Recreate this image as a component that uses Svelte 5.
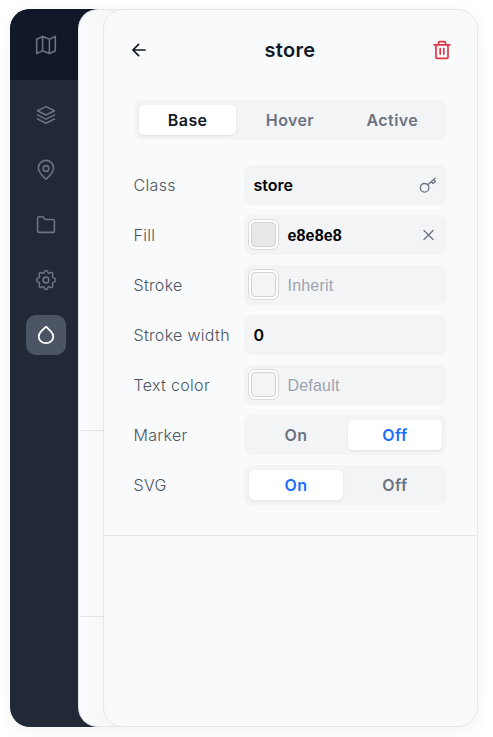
<script>
  const tabs = ['Base', 'Hover', 'Active'];
  let tab = $state('Base');
  const rows = [
    { label: 'Class', value: 'store', icon: 'key' },
    { label: 'Fill', value: 'e8e8e8', swatch: '#e8e8e8', icon: 'clear' },
    { label: 'Stroke', placeholder: 'Inherit', swatch: '#f3f4f6' },
    { label: 'Stroke width', value: '0' },
    { label: 'Text color', placeholder: 'Default', swatch: '#f3f4f6' }
  ];
  const switches = $state([
    { label: 'Marker', value: 'Off' },
    { label: 'SVG', value: 'On' }
  ]);
</script>

<div class="app">
  <div class="window">
    <nav>
      <div class="brand">
        <svg width="22" height="22" viewBox="0 0 22 22"><path d="M1.700 5.200 7.600 2.400v14.400L1.700 19.600zM7.600 2.400l6.800 2.800v14.400l-6.800-2.800M14.400 5.200l5.900-2.800v14.400l-5.900 2.800" /></svg>
      </div>
      <div class="items">
        <button aria-label="Layers"><svg width="22" height="22" viewBox="0 0 22 22"><path d="M11 2.600 19.500 6.800 11 11 2.500 6.800zM2.500 10.900 11 15.100l8.500-4.200M2.500 15 11 19.200l8.500-4.200" /></svg></button>
        <button aria-label="Markers"><svg width="22" height="22" viewBox="0 0 22 22"><path d="M18.600 9c0 4.700-5.500 9.300-7.600 11.200C8.900 18.300 3.400 13.700 3.400 9a7.600 7.600 0 0 1 15.200 0z" /><circle cx="11" cy="9.400" r="2.800" /></svg></button>
        <button aria-label="Groups"><svg width="22" height="22" viewBox="0 0 22 22"><path d="M2.600 4.300a1.500 1.500 0 0 1 1.500-1.500H8l2.200 2.700h7.700a1.500 1.500 0 0 1 1.500 1.500v9.900a1.500 1.500 0 0 1-1.500 1.500H4.100a1.500 1.500 0 0 1-1.500-1.500z" /></svg></button>
        <button aria-label="Settings"><svg width="22" height="22" viewBox="0 0 22 22"><circle cx="11" cy="11" r="2.900" /><path d="M9.200 3.200C9.700.9 12.300.9 12.800 3.200c.2 1 1.200 1.400 2.100.8 2-1.300 3.800.5 2.700 2.600-.5.900-.1 1.900.9 2.200 2.600.5 2.600 3.900 0 4.400-1 .3-1.400 1.300-.9 2.200 1.100 2.100-.7 3.900-2.700 2.600-.9-.6-1.900-.2-2.100.8-.5 2.300-3.100 2.300-3.600 0-.2-1-1.200-1.400-2.100-.8-2 1.300-3.800-.5-2.700-2.600.5-.9.100-1.900-.9-2.200-2.600-.5-2.600-3.900 0-4.400 1-.3 1.400-1.300.9-2.200C3.300 4.500 5.100 2.700 7.100 4c.9.600 1.900.2 2.100-.8z" /></svg></button>
        <button class="active" aria-label="Styles"><svg width="22" height="22" viewBox="0 0 22 22"><path d="M11 2.600 6.100 7.400C2.800 10.900 3.200 14.800 6 17.300c2.800 2.500 7.200 2.500 10 0 2.800-2.500 3.200-6.400-.1-9.900z" /></svg></button>
      </div>
    </nav>

    <div class="back"><div class="block one"></div><div class="block two"></div></div>

    <section class="panel">
      <div class="content">
        <header>
          <button aria-label="Back"><svg width="16" height="16" viewBox="0 0 16 16"><path d="M14 8H2.200M7.600 2.300 1.900 8l5.700 5.700" /></svg></button>
          <h1>store</h1>
          <button class="delete" aria-label="Delete"><svg width="20" height="20" viewBox="0 0 20 20"><path d="M2.100 4.800h15.800M4 4.800v12.600q0 .9.900.9h10.200q.9 0 .9-.9V4.800M6.500 4.800V2.900q0-1.300 1.300-1.300h4.400q1.300 0 1.300 1.300v1.900M8.200 8.500v5.500M11.800 8.500v5.500" /></svg></button>
        </header>

        <div class="segments tabs">
          {#each tabs as t}
            <button class:selected={tab === t} onclick={() => (tab = t)}>{t}</button>
          {/each}
        </div>

        <div class="form">
          {#each rows as row}
            <div class="row">
              <span class="label">{row.label}</span>
              <div class="field" class:with-swatch={row.swatch}>
                {#if row.swatch}<span class="swatch"><i style="background:{row.swatch}"></i></span>{/if}
                <span class="value" class:placeholder={row.placeholder}>{row.value ?? row.placeholder}</span>
                {#if row.icon === 'key'}
                  <svg width="18" height="18" viewBox="0 0 18 18"><circle cx="5.600" cy="11.800" r="4.300" /><path d="m8.700 8.700 7.500-6.400M12.300 5.600l1.500 2 2.600-2.100-1.600-1.900" /></svg>
                {:else if row.icon === 'clear'}
                  <svg width="18" height="18" viewBox="0 0 18 18"><path d="m5 4.500 9 9M14 4.500l-9 9" /></svg>
                {/if}
              </div>
            </div>
          {/each}
          {#each switches as s}
            <div class="row">
              <span class="label">{s.label}</span>
              <div class="segments switch">
                {#each ['On', 'Off'] as v}
                  <button class:selected={s.value === v} onclick={() => (s.value = v)}>{v}</button>
                {/each}
              </div>
            </div>
          {/each}
        </div>
      </div>
    </section>
  </div>
</div>

<style>
  :global(body) { background: #fff; overflow: hidden; }
  * { box-sizing: border-box; }
  .app { width: 493px; height: 737px; padding: 9px 15px 10px 10px; overflow: hidden; font: 16px/24px Inter, sans-serif; }
  .window { display: flex; width: 468px; height: 718px; border-radius: 20px; box-shadow: 0 4px 18px rgba(0, 0, 0, .05); }
  svg { display: block; fill: none; stroke: currentColor; stroke-width: 1.600; stroke-linecap: round; stroke-linejoin: round; }
  button { border: 0; padding: 0; margin: 0; background: none; font: inherit; color: inherit; }
  nav { width: 93px; margin-right: -25px; flex: none; color: #6b7280; border-radius: 20px 0 0 20px; overflow: hidden; background: #212936; }
  .brand { height: 71px; padding: 25px; background: #111827; }
  .items { display: flex; flex-direction: column; gap: 15px; padding: 15px 16px; }
  .items button { width: 40px; height: 40px; display: grid; place-items: center; border-radius: 10px; }
  .items .active { background: #4b5563; color: #fff; }
  .active svg { stroke-width: 1.800; }
  .back { position: relative; width: 46px; margin-right: -21px; flex: none; border: 1px solid #e5e7eb; border-right: 0; border-radius: 20px 0 0 20px; background: linear-gradient(90deg, #fafbfc 5px, #f6f7f9 26px); }
  .block { border-bottom: 1px solid #e2e4e7; }
  .one { height: 421px; }
  .two { height: 186px; }
  .panel { position: relative; width: 375px; flex: none; border: 1px solid #e5e7eb; border-radius: 20px; background: #f9fafc; }
  .content { height: 526px; padding: 28px 30px 0; border-bottom: 1px solid #e5e7eb; }
  header { height: 24px; display: flex; align-items: center; justify-content: space-between; margin: 0 -5px 0 -3px; color: #111827; }
  header svg { stroke-width: 1.700; }
  h1 { margin: 0; padding-left: 1px; font-size: 20px; line-height: 24px; font-weight: 600; letter-spacing: .35px; }
  .delete { color: #dc3545; }
  .segments { display: flex; height: 40px; padding: 5px; background: #f3f4f6; border-radius: 8px; }
  .segments button { flex: 1; height: 30px; border-radius: 5px; color: #6b7280; font-weight: 600; letter-spacing: .4px; }
  .segments .selected { background: #fff; color: #111827; box-shadow: 0 1px 3px rgba(0, 0, 0, .08); }
  .switch .selected { color: #1a6eff; }
  .tabs { margin-top: 38px; padding-right: 6px; gap: 5px; }
  .form { display: flex; flex-direction: column; gap: 10px; margin-top: 25px; }
  .row { display: flex; height: 40px; align-items: center; }
  .label { width: 110.500px; margin-left: -.5px; flex: none; color: #4b5563; font-weight: 350; letter-spacing: .32px; white-space: nowrap; }
  .field, .switch { width: 203px; }
  .switch { gap: 5px; }
  .field { display: flex; align-items: center; height: 40px; padding: 0 10.500px 0 9.500px; border-radius: 8px; background: #f3f4f6; color: #6b7280; }
  .with-swatch { padding-left: 4px; }
  .swatch { width: 31px; height: 31px; flex: none; padding: 2px; margin: 0 8.500px 1px 0; border: 1px solid #d7d9dd; border-radius: 7px; background: #fff; }
  .swatch i { display: block; height: 25px; border: 1px solid #d1d3d6; border-radius: 4px; }
  .value { flex: 1; color: #000; font-weight: 600; }
  .with-swatch .value { font-family: "Liberation Sans", Arial, sans-serif; letter-spacing: .15px; padding-top: 1px; }
  .value.placeholder { color: #9ca3af; font-weight: 400; letter-spacing: .2px; }
  .field svg { stroke-width: 1.300; }
</style>
